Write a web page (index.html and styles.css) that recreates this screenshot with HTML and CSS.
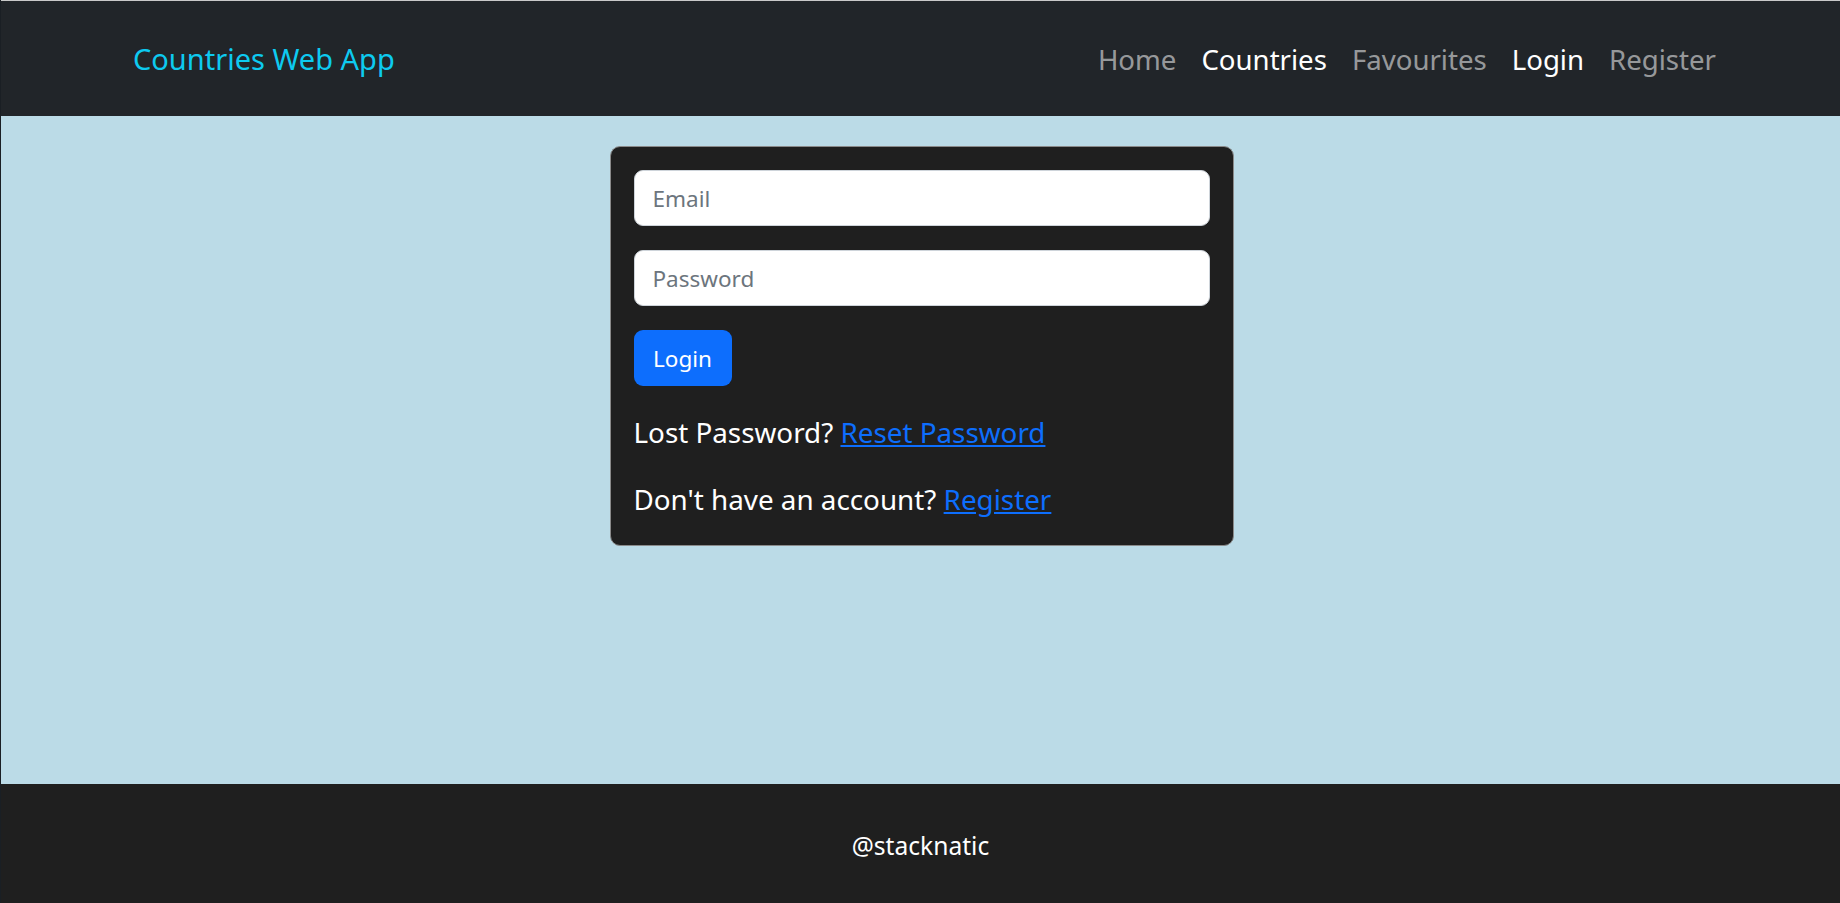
FILE: index.html
```html
<!DOCTYPE html>
<html lang="en">
<head>
<meta charset="utf-8">
<title>Countries Web App</title>
<link rel="stylesheet" href="styles.css">
</head>
<body>
<header class="navbar">
  <a class="brand" href="#">Countries Web App</a>
  <nav class="nav">
    <a class="nav-link" href="#">Home</a>
    <a class="nav-link active" href="#">Countries</a>
    <a class="nav-link" href="#">Favourites</a>
    <a class="nav-link active" href="#">Login</a>
    <a class="nav-link" href="#">Register</a>
  </nav>
</header>
<main class="main">
  <form class="card">
    <input class="field" type="email" placeholder="Email">
    <input class="field" type="password" placeholder="Password">
    <div class="actions"><button class="btn" type="button">Login</button></div>
    <p class="line">Lost Password? <a href="#">Reset Password</a></p>
    <p class="line">Don't have an account? <a href="#">Register</a></p>
  </form>
</main>
<footer class="footer">@stacknatic</footer>
</body>
</html>
```

FILE: styles.css
```css
* { box-sizing: border-box; }
html, body { height: 100%; }
body {
  margin: 0;
  font-family: "Noto Sans", "Open Sans", sans-serif;
  background: #bbdbe7;
  color: #fff;
  display: flex;
  flex-direction: column;
  min-height: 903px;
  border-left: 1px solid #1a1f24;
}
.navbar {
  height: 116px;
  background: #212529;
  border-top: 1px solid #c9c9c9;
  display: flex;
  align-items: center;
  justify-content: space-between;
  padding: 0 124px 0 132px;
}
.brand {
  color: #0dcaf0;
  text-decoration: none;
  font-size: 29px;
}
.nav { display: flex; gap: 25px; }
.nav-link {
  color: rgba(255,255,255,0.55);
  text-decoration: none;
  font-size: 27.6px;
}
.nav-link.active { color: #fff; }
.main {
  flex: 1;
  display: flex;
  justify-content: center;
  align-items: flex-start;
  padding-top: 30px;
  padding-left: 2px;
}
.card {
  width: 624px;
  background: #1f1f1f;
  border: 1px solid #8a8a8a;
  border-radius: 10px;
  padding: 23px 23px 26px;
  display: flex;
  flex-direction: column;
}
.field {
  height: 56px;
  border: 1px solid #ced4da;
  border-radius: 9px;
  padding: 0 18px;
  font-family: inherit;
  font-size: 22.5px;
  color: #212529;
  background: #fff;
  margin-bottom: 24px;
}
.field::placeholder { color: #6c757d; }
.actions { display: flex; }
.btn {
  height: 56px;
  width: 98px;
  background: #0d6efd;
  border: none;
  border-radius: 9px;
  color: #fff;
  font-family: inherit;
  font-size: 22.5px;
  padding: 0;
}
.line {
  margin: 26px 0 0;
  font-size: 27.8px;
  line-height: 40px;
}
.line + .line { margin-top: 27px; }
.line a { color: #0d6efd; }
.footer {
  height: 119px;
  background: #1f1f1f;
  display: flex;
  align-items: center;
  justify-content: center;
  font-size: 24.6px;
  padding-top: 4px;
}
```
